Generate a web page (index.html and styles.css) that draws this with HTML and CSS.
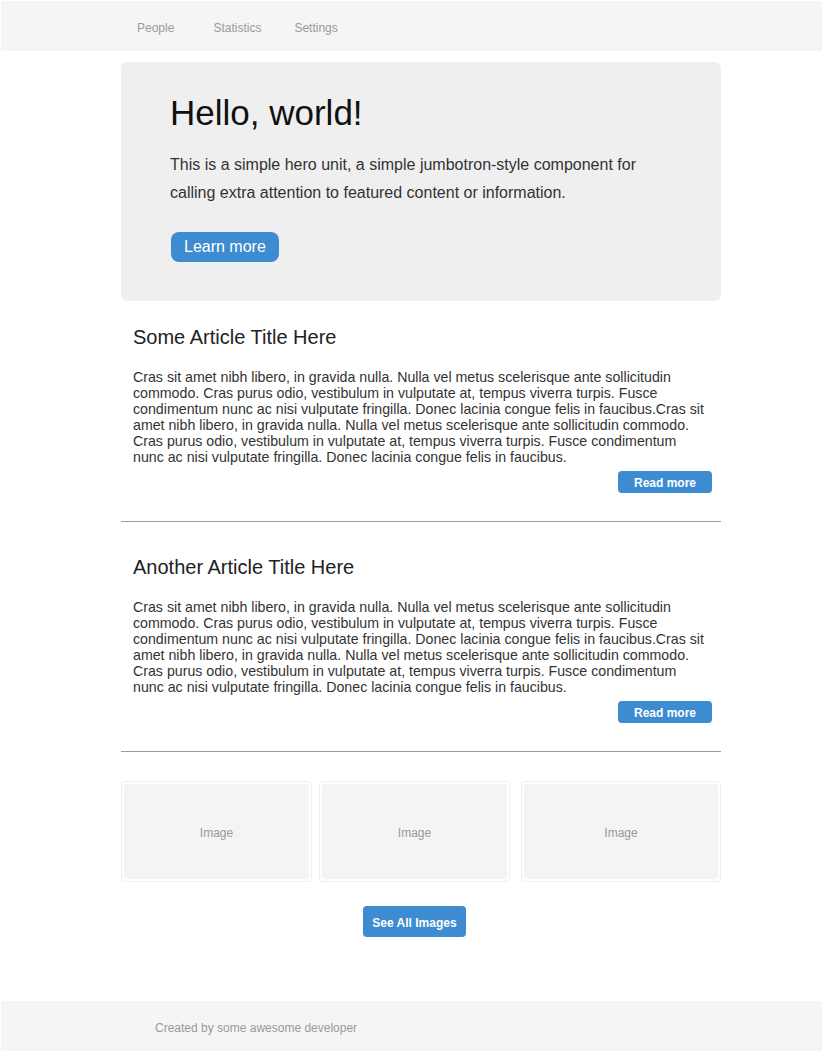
FILE: index.html
```html
<!DOCTYPE html>
<html lang="en">
<head>
<meta charset="utf-8">
<title>Hello, world!</title>
<link rel="stylesheet" href="styles.css">
</head>
<body>
<nav class="navbar">
  <div class="container nav-inner">
    <a class="nav-link nav-people" href="#">People</a>
    <a class="nav-link nav-stats" href="#">Statistics</a>
    <a class="nav-link nav-settings" href="#">Settings</a>
  </div>
</nav>

<main class="container">
  <section class="hero">
    <h1 class="hero-title">Hello, world!</h1>
    <p class="hero-text">This is a simple hero unit, a simple jumbotron-style component for calling extra attention to featured content or information.</p>
    <a class="btn btn-lg" href="#">Learn more</a>
  </section>

  <article class="article">
    <h2 class="article-title">Some Article Title Here</h2>
    <p class="article-text">Cras sit amet nibh libero, in gravida nulla. Nulla vel metus scelerisque ante sollicitudin commodo. Cras purus odio, vestibulum in vulputate at, tempus viverra turpis. Fusce condimentum nunc ac nisi vulputate fringilla. Donec lacinia congue felis in faucibus.Cras sit amet nibh libero, in gravida nulla. Nulla vel metus scelerisque ante sollicitudin commodo. Cras purus odio, vestibulum in vulputate at, tempus viverra turpis. Fusce condimentum nunc ac nisi vulputate fringilla. Donec lacinia congue felis in faucibus.</p>
    <div class="article-actions"><a class="btn btn-sm" href="#">Read more</a></div>
  </article>
  <hr class="divider">

  <article class="article">
    <h2 class="article-title">Another Article Title Here</h2>
    <p class="article-text">Cras sit amet nibh libero, in gravida nulla. Nulla vel metus scelerisque ante sollicitudin commodo. Cras purus odio, vestibulum in vulputate at, tempus viverra turpis. Fusce condimentum nunc ac nisi vulputate fringilla. Donec lacinia congue felis in faucibus.Cras sit amet nibh libero, in gravida nulla. Nulla vel metus scelerisque ante sollicitudin commodo. Cras purus odio, vestibulum in vulputate at, tempus viverra turpis. Fusce condimentum nunc ac nisi vulputate fringilla. Donec lacinia congue felis in faucibus.</p>
    <div class="article-actions"><a class="btn btn-sm" href="#">Read more</a></div>
  </article>
  <hr class="divider divider-last">

  <section class="gallery">
    <div class="thumb"><div class="thumb-inner">Image</div></div>
    <div class="thumb"><div class="thumb-inner">Image</div></div>
    <div class="thumb"><div class="thumb-inner">Image</div></div>
  </section>

  <div class="gallery-actions">
    <a class="btn btn-md" href="#">See All Images</a>
  </div>
</main>

<footer class="footer">
  <div class="container footer-inner">Created by some awesome developer</div>
</footer>
</body>
</html>
```

FILE: styles.css
```css
* {
  box-sizing: border-box;
}

body {
  margin: 1px;
  font-family: "Liberation Sans", Arial, sans-serif;
  color: #333;
  background: #fff;
}

a {
  text-decoration: none;
}

.container {
  width: 600px;
  margin-left: 120px;
}

/* Navbar */
.navbar {
  background: #f5f5f5;
  height: 50px;
}

.nav-inner {
  display: flex;
  align-items: center;
  height: 50px;
  padding-left: 16px;
  padding-top: 3px;
}

.nav-link {
  font-size: 12px;
  color: #999;
}

.nav-stats {
  margin-left: 39px;
}

.nav-settings {
  margin-left: 33px;
}

/* Hero */
.hero {
  margin-top: 11px;
  margin-bottom: 24px;
  background: #efefef;
  border-radius: 6px;
  padding: 31px 48px 39px 49px;
  height: 239px;
}

.hero-title {
  margin: 0 0 18px;
  font-size: 35px;
  line-height: 40px;
  font-weight: normal;
  color: #111;
}

.hero-text {
  margin: 0 0 25px;
  font-size: 16px;
  line-height: 28px;
  color: #333;
  width: 480px;
}

.btn {
  display: inline-flex;
  align-items: center;
  justify-content: center;
  background: #3d8bd0;
  color: #fff;
}

.btn-lg {
  height: 30px;
  padding: 0 13px;
  margin-left: 1px;
  font-size: 16px;
  border-radius: 8px;
}

.btn-sm {
  height: 22px;
  width: 94px;
  font-size: 12px;
  font-weight: bold;
  border-radius: 4px;
  padding-top: 2px;
}

.btn-md {
  height: 31px;
  width: 103px;
  font-size: 12px;
  font-weight: bold;
  border-radius: 4px;
  padding-top: 2px;
}

/* Articles */
.article {
  padding: 0 9px 0 12px;
}

.article-title {
  margin: 0 0 20px;
  font-size: 20px;
  line-height: 24px;
  font-weight: normal;
  color: #222;
}

.article-text {
  margin: 0 3px 6px 0;
  font-size: 14.2px;
  line-height: 16px;
  color: #333;
}

.article-actions {
  display: flex;
  justify-content: flex-end;
}

.divider {
  border: 0;
  border-top: 1px solid #9c9c9c;
  margin: 28px 0 33px;
}

.divider-last {
  margin-bottom: 29px;
}

/* Gallery */
.gallery {
  display: flex;
  height: 101px;
}

.thumb {
  width: 191px;
  border: 1px solid #efefef;
  border-radius: 4px;
  padding: 2px;
  background: #fff;
}

.thumb:nth-child(1) {
  margin-right: 7px;
}

.thumb:nth-child(2) {
  margin-right: 11px;
}

.thumb:nth-child(3) {
  flex: 1;
}

.thumb-inner {
  height: 100%;
  background: #f4f4f4;
  border-radius: 3px;
  display: flex;
  align-items: center;
  justify-content: center;
  font-size: 12px;
  color: #999;
  padding-top: 2px;
}

.gallery-actions {
  display: flex;
  justify-content: center;
  padding-right: 13px;
  margin-top: 24px;
  margin-bottom: 64px;
}

/* Footer */
.footer {
  background: #f5f5f5;
  height: 50px;
}

.footer-inner {
  height: 50px;
  display: flex;
  align-items: center;
  padding-left: 34px;
  padding-top: 4px;
  font-size: 12px;
  color: #999;
}
```
